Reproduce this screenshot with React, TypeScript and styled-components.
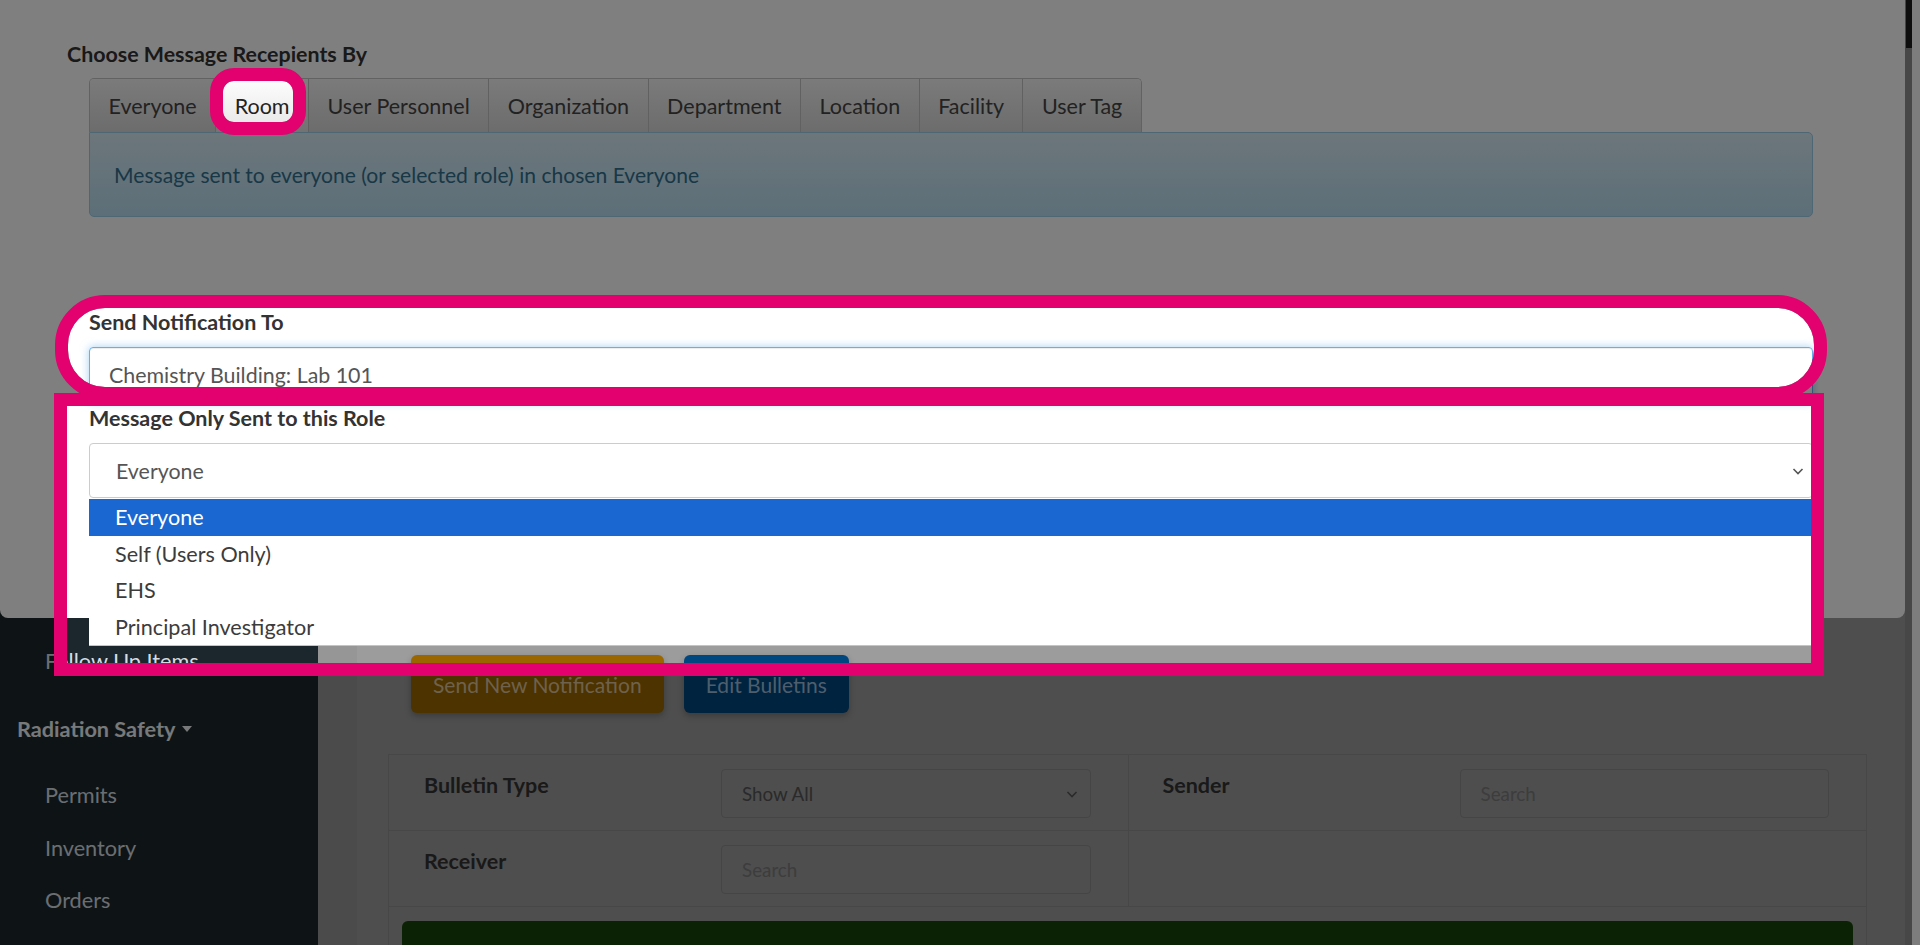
import React from "react";
import styled, { createGlobalStyle } from "styled-components";

const GlobalStyle = createGlobalStyle`
  html, body {
    margin: 0;
    padding: 0;
  }
  body {
    font-family: Lato, "Open Sans", "Liberation Sans", sans-serif;
    background: #9c9c9c;
    overflow: hidden;
  }
  * {
    box-sizing: border-box;
  }
`;

const MARK = "#e3006f";

const Screen = styled.div`
  position: relative;
  width: 1920px;
  height: 945px;
  overflow: hidden;
`;

/* ---------- page behind the modal ---------- */

const Page = styled.div`
  display: flex;
  height: 100%;
`;

const Sidebar = styled.nav`
  width: 318px;
  flex-shrink: 0;
  background: #1c272d;
  padding-top: 636px;
  display: flex;
  flex-direction: column;
`;

const NavSection = styled.div`
  flex-shrink: 0;
  height: 83px;
  padding: 31px 0 0 17px;
  display: flex;
  align-items: flex-start;
  gap: 6px;
  font-size: 21.7px;
  line-height: 24px;
  font-weight: 700;
  color: #eef2f4;
`;

const NavLink = styled.a<{ $h?: number }>`
  flex-shrink: 0;
  display: flex;
  align-items: center;
  height: ${(p) => p.$h ?? 52.5}px;
  padding-left: 45px;
  font-size: 21.7px;
  color: #d6dde2;
`;

const Main = styled.main`
  flex: 1;
  display: flex;
  background: #9c9c9c;
`;

const Gutter = styled.div`
  width: 39px;
  background: #969696;
`;

const Content = styled.div`
  flex: 1;
  padding: 655px 38px 0 31px;
`;

const ButtonRow = styled.div`
  display: flex;
  gap: 20px;
  padding-left: 23px;
  margin-bottom: 41px;
`;

const ActionButton = styled.button<{ $bg: string; $fg: string }>`
  height: 58px;
  padding: 0 22px;
  border: none;
  border-radius: 6px;
  background: ${(p) => p.$bg};
  color: ${(p) => p.$fg};
  font-family: inherit;
  font-size: 21px;
  box-shadow: 0 3px 6px rgba(0, 0, 0, 0.25);
`;

const FilterCard = styled.div`
  border: 1px solid #8e8e8e;
`;

const FilterRow = styled.div`
  display: grid;
  grid-template-columns: 1fr 1fr;
  height: 76px;
  border-bottom: 1px solid #8e8e8e;
`;

const FilterCell = styled.div`
  display: grid;
  grid-template-columns: 297px 1fr;
  padding: 0 37px 0 35px;
  & + & {
    border-left: 1px solid #8e8e8e;
    padding-left: 34px;
  }
`;

const FilterLabel = styled.div`
  padding-top: 18px;
  font-size: 21.5px;
  line-height: 24px;
  font-weight: 700;
  color: #333;
`;

const FilterField = styled.div<{ $muted?: boolean }>`
  margin-top: 14px;
  height: 49px;
  border: 1px solid #8a8a8a;
  border-radius: 4px;
  display: flex;
  align-items: center;
  justify-content: space-between;
  padding: 0 12px 0 20px;
  font-size: 18.8px;
  color: ${(p) => (p.$muted ? "#7a7a7a" : "#555")};
`;

const ApplyButton = styled.div`
  margin: 14px 13px 0 13px;
  height: 58px;
  border-radius: 6px;
  background: #164408;
  color: #a6b8a0;
  display: flex;
  align-items: center;
  justify-content: center;
  font-size: 21px;
  padding-top: 42px;
`;

const ScrollTrack = styled.div`
  width: 15px;
  display: flex;
`;

const ScrollLane = styled.div`
  width: 7px;
  background: #8e8e8e;
  display: flex;
  flex-direction: column;
`;

const ScrollThumb = styled.div`
  height: 48px;
  background: #1c1c1c;
  margin-left: 1px;
`;

const PageLane = styled.div`
  flex: 1;
  background: #fafafa;
`;

/* ---------- modal ---------- */

const Modal = styled.section`
  position: absolute;
  left: 0;
  top: 0;
  width: 1905px;
  height: 618px;
  background: #fff;
  border-radius: 0 0 8px 8px;
  padding: 42px 0 0 67px;
`;

const Heading = styled.h4`
  margin: 0;
  font-size: 21.4px;
  line-height: 24px;
  font-weight: 700;
  color: #333;
`;

const ModalBody = styled.div`
  width: 1724px;
  margin-left: 22px;
`;

const TabBar = styled.div`
  margin-top: 12px;
  display: inline-flex;
  height: 54px;
  border: 1px solid #c5c5c5;
  border-bottom: none;
  border-radius: 5px 5px 0 0;
  overflow: hidden;
`;

const Tab = styled.div<{ $active?: boolean }>`
  display: flex;
  align-items: center;
  padding: 0 18.5px;
  font-size: 21.5px;
  color: ${(p) => (p.$active ? "#222" : "#454545")};
  background: ${(p) =>
    p.$active
      ? "linear-gradient(#fdfdfd, #e6e6e6)"
      : "linear-gradient(#f6f6f6, #d9d9d9)"};
  & + & {
    border-left: 1px solid #c2c2c2;
  }
`;

const InfoBox = styled.div`
  height: 85px;
  display: flex;
  align-items: center;
  padding: 0 24px;
  border: 1px solid #9acfea;
  border-radius: 0 5px 5px 5px;
  background: linear-gradient(#d9edf7, #b9def0);
  color: #31708f;
  font-size: 21.1px;
`;

const FieldLabel = styled.label<{ $gap: number }>`
  display: block;
  margin-top: ${(p) => p.$gap}px;
  font-size: 21.5px;
  line-height: 24px;
  font-weight: 700;
  color: #333;
`;

const TextInput = styled.div`
  margin-top: 13px;
  height: 56px;
  display: flex;
  align-items: center;
  padding: 0 19px;
  border: 1px solid #66afe9;
  border-radius: 4px;
  box-shadow: inset 0 1px 1px rgba(0, 0, 0, 0.075),
    0 0 8px rgba(102, 175, 233, 0.6);
  font-size: 21.4px;
  color: #555;
`;

const SelectWrap = styled.div`
  position: relative;
  margin-top: 13px;
`;

const SelectBox = styled.div`
  height: 55px;
  display: flex;
  align-items: center;
  justify-content: space-between;
  padding: 0 8px 0 26px;
  border: 1px solid #ccc;
  border-radius: 4px;
  font-size: 21.4px;
  color: #555;
`;

const OptionList = styled.ul`
  position: absolute;
  top: calc(100% + 1px);
  left: 0;
  right: 0;
  margin: 0;
  padding: 0;
  list-style: none;
  background: #fff;
  border-bottom: 1px solid #c4c4c4;
`;

const Option = styled.li<{ $selected?: boolean }>`
  height: 36.5px;
  display: flex;
  align-items: center;
  padding-left: 26px;
  font-size: 21.6px;
  color: ${(p) => (p.$selected ? "#fff" : "#3c3c3c")};
  background: ${(p) => (p.$selected ? "#1a67d2" : "transparent")};
`;

/* ---------- annotation layer ---------- */

const Shade = styled.svg`
  position: absolute;
  left: 0;
  top: 0;
  pointer-events: none;
`;

const Frame = styled.div<{
  $x: number;
  $y: number;
  $w: number;
  $h: number;
  $r: number;
}>`
  position: absolute;
  left: ${(p) => p.$x}px;
  top: ${(p) => p.$y}px;
  width: ${(p) => p.$w}px;
  height: ${(p) => p.$h}px;
  border: 13px solid ${MARK};
  border-radius: ${(p) => p.$r}px;
  pointer-events: none;
`;

const roundRect = (x: number, y: number, w: number, h: number, r: number) =>
  r === 0
    ? `M${x},${y}H${x + w}V${y + h}H${x}Z`
    : `M${x + r},${y}H${x + w - r}A${r},${r} 0 0 1 ${x + w},${y + r}` +
      `V${y + h - r}A${r},${r} 0 0 1 ${x + w - r},${y + h}` +
      `H${x + r}A${r},${r} 0 0 1 ${x},${y + h - r}` +
      `V${y + r}A${r},${r} 0 0 1 ${x + r},${y}Z`;

const frames = [
  { x: 210, y: 68, w: 96, h: 67, r: 24 },
  { x: 55, y: 295, w: 1772, h: 105, r: 50 },
  { x: 54, y: 393, w: 1770, h: 283, r: 0 },
];

const shadePath =
  "M0,0H1920V945H0Z" +
  frames
    .map((f) =>
      roundRect(f.x + 13, f.y + 13, f.w - 26, f.h - 26, Math.max(f.r - 13, 0))
    )
    .join("");

const Chevron = ({ size = 12 }: { size?: number }) => (
  <svg width={size} height={size} viewBox="0 0 12 12">
    <path
      d="M1.5 4 L6 8.5 L10.5 4"
      fill="none"
      stroke="#555"
      strokeWidth="1.6"
    />
  </svg>
);

const tabs = [
  "Everyone",
  "Room",
  "User Personnel",
  "Organization",
  "Department",
  "Location",
  "Facility",
  "User Tag",
];

const roles = [
  "Everyone",
  "Self (Users Only)",
  "EHS",
  "Principal Investigator",
];

export default function App() {
  return (
    <Screen>
      <GlobalStyle />
      <Page>
        <Sidebar>
          <NavLink $h={50}>Follow Up Items</NavLink>
          <NavSection>
            Radiation Safety
            <svg width="12" height="24" viewBox="0 0 12 24">
              <path d="M1 9 L11 9 L6 15 Z" fill="#eef2f4" />
            </svg>
          </NavSection>
          <NavLink>Permits</NavLink>
          <NavLink>Inventory</NavLink>
          <NavLink>Orders</NavLink>
          <NavLink>Waste</NavLink>
        </Sidebar>
        <Main>
          <Gutter />
          <Content>
            <ButtonRow>
              <ActionButton $bg="#9a6600" $fg="#dcc29a">
                Send New Notification
              </ActionButton>
              <ActionButton $bg="#00467f" $fg="#9cbcd8">
                Edit Bulletins
              </ActionButton>
            </ButtonRow>
            <FilterCard>
              <FilterRow>
                <FilterCell>
                  <FilterLabel>Bulletin Type</FilterLabel>
                  <FilterField>
                    Show All
                    <Chevron />
                  </FilterField>
                </FilterCell>
                <FilterCell>
                  <FilterLabel>Sender</FilterLabel>
                  <FilterField $muted>Search</FilterField>
                </FilterCell>
              </FilterRow>
              <FilterRow>
                <FilterCell>
                  <FilterLabel>Receiver</FilterLabel>
                  <FilterField $muted>Search</FilterField>
                </FilterCell>
                <FilterCell />
              </FilterRow>
              <ApplyButton>Apply Filters</ApplyButton>
            </FilterCard>
          </Content>
        </Main>
        <ScrollTrack>
          <ScrollLane>
            <ScrollThumb />
          </ScrollLane>
          <PageLane />
        </ScrollTrack>
      </Page>

      <Modal>
        <Heading>Choose Message Recepients By</Heading>
        <ModalBody>
          <TabBar>
            {tabs.map((t) => (
              <Tab key={t} $active={t === "Room"}>
                {t}
              </Tab>
            ))}
          </TabBar>
          <InfoBox>
            Message sent to everyone (or selected role) in chosen Everyone
          </InfoBox>

          <FieldLabel $gap={93}>Send Notification To</FieldLabel>
          <TextInput>Chemistry Building: Lab 101</TextInput>

          <FieldLabel $gap={3}>Message Only Sent to this Role</FieldLabel>
          <SelectWrap>
            <SelectBox>
              Everyone
              <Chevron />
            </SelectBox>
            <OptionList>
              {roles.map((r, i) => (
                <Option key={r} $selected={i === 0}>
                  {r}
                </Option>
              ))}
            </OptionList>
          </SelectWrap>
        </ModalBody>
      </Modal>

      <Shade width="1920" height="945" viewBox="0 0 1920 945">
        <path d={shadePath} fill="rgba(0,0,0,0.5)" fillRule="evenodd" />
      </Shade>
      {frames.map((f, i) => (
        <Frame key={i} $x={f.x} $y={f.y} $w={f.w} $h={f.h} $r={f.r} />
      ))}
    </Screen>
  );
}
